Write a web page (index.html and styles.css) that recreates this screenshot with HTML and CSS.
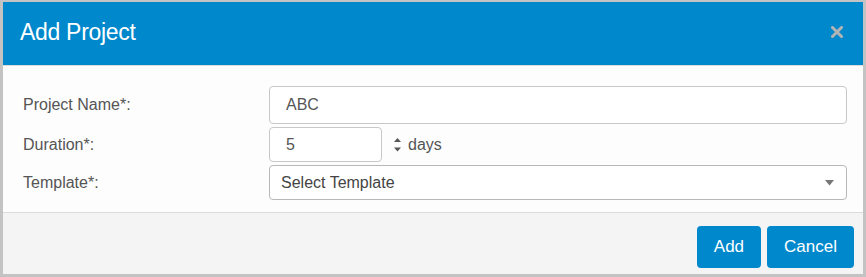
FILE: index.html
```html
<!DOCTYPE html>
<html>
<head>
<meta charset="utf-8">
<link rel="stylesheet" href="styles.css">
</head>
<body>
<div class="dialog">
  <div class="header">
    <h4 class="title">Add Project</h4>
    <button class="close" aria-label="Close">
      <svg width="12" height="12" viewBox="0 0 12 12"><path d="M1.5 1.5 L10.5 10.5 M10.5 1.5 L1.5 10.5" stroke="#b4b4b4" stroke-width="3" stroke-linecap="round"/></svg>
    </button>
  </div>
  <div class="body">
    <div class="row">
      <label class="label">Project Name*:</label>
      <div class="field"><input class="input input-lg" type="text" value="ABC"></div>
    </div>
    <div class="row">
      <label class="label">Duration*:</label>
      <div class="field duration">
        <input class="input input-num" type="text" value="5">
        <svg class="spin" width="9" height="16" viewBox="0 0 9 16"><path d="M4.5 1 L8 5 L1 5 Z M1 10.5 L8 10.5 L4.5 14.5 Z" fill="#555"/></svg>
        <span class="unit">days</span>
      </div>
    </div>
    <div class="row">
      <label class="label">Template*:</label>
      <div class="field">
        <div class="select">
          <span>Select Template</span>
          <svg width="9" height="6" viewBox="0 0 9 6"><path d="M0 0 L9 0 L4.5 5.5 Z" fill="#777"/></svg>
        </div>
      </div>
    </div>
  </div>
  <div class="footer">
    <button class="btn">Add</button>
    <button class="btn">Cancel</button>
  </div>
</div>
</body>
</html>
```
FILE: styles.css
```css
html, body {
  margin: 0;
  padding: 0;
  background: #c3c3c3;
}
body {
  font-family: "Liberation Sans", Arial, sans-serif;
  padding: 2px 4px 0 3px;
}
.dialog {
  width: 860px;
  height: 272px;
  background: #fdfdfd;
  display: flex;
  flex-direction: column;
}
.header {
  background: #0088cc;
  border-bottom: 1px solid #dcdcdc;
  display: flex;
  align-items: center;
  justify-content: space-between;
  padding: 0 20px 4px 17px;
  box-sizing: border-box;
  height: 64px;
}
.title {
  margin: 0;
  color: #fff;
  font-weight: normal;
  font-size: 23px;
  letter-spacing: -0.3px;
  line-height: 26px;
}
.close {
  background: none;
  border: 0;
  padding: 0;
  margin: 0;
  display: flex;
}
.body {
  padding: 20px 16px 12px 20px;
  display: flex;
  flex-direction: column;
  gap: 3px;
  border-bottom: 1px solid #dcdcdc;
}
.row {
  display: flex;
  align-items: center;
}
.label {
  width: 246px;
  flex: none;
  font-size: 16px;
  color: #555;
}
.field {
  flex: 1;
  display: flex;
  align-items: center;
}
.input {
  box-sizing: border-box;
  border: 1px solid #c8c8c8;
  border-radius: 4px;
  background: #fff;
  font-family: "Liberation Sans", Arial, sans-serif;
  font-size: 16px;
  color: #555;
  height: 35px;
  padding: 0 16px;
  outline: none;
}
.input-lg {
  width: 100%;
  height: 38px;
}
.input-num {
  width: 113px;
}
.spin {
  margin-left: 11px;
}
.unit {
  margin-left: 6px;
  font-size: 16px;
  color: #555;
}
.select {
  box-sizing: border-box;
  width: 100%;
  height: 35px;
  border: 1px solid #b8b8b8;
  border-radius: 4px;
  background: #fff;
  display: flex;
  align-items: center;
  justify-content: space-between;
  padding: 0 12px 0 11px;
  font-size: 16px;
  color: #444;
}
.footer {
  flex: 1;
  background: #f4f4f4;
  display: flex;
  justify-content: flex-end;
  align-items: flex-start;
  gap: 6px;
  padding: 13px 9px 0 0;
}
.btn {
  height: 42px;
  background: #0088cc;
  color: #fff;
  border: 0;
  border-radius: 4px;
  font-family: "Liberation Sans", Arial, sans-serif;
  font-size: 17px;
  padding: 0 17px;
}
```
